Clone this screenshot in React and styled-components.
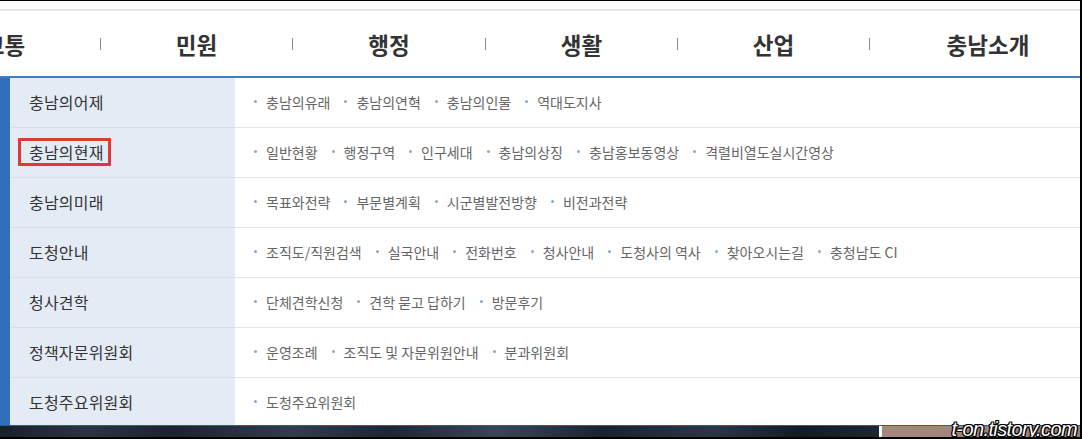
import React from "react";
import styled, { createGlobalStyle } from "styled-components";

const Global = createGlobalStyle`
  html, body { margin: 0; padding: 0; background: #fff; }
  body { font-family: "Noto Sans CJK KR", "Noto Sans", sans-serif; }
  * { box-sizing: border-box; }
`;

const Frame = styled.div`
  position: relative;
  width: 1082px;
  height: 439px;
  border-top: 1px solid #000;
  border-right: 2px solid #000;
  border-bottom: 2px solid #000;
  display: flex;
  flex-direction: column;
  overflow: hidden;
  background: #fff;
`;

const Header = styled.header`
  padding-top: 8px;
  flex: 0 0 auto;
`;

const Nav = styled.nav`
  height: 69px;
  border-top: 2px solid #e6e6e6;
  border-bottom: 2px solid #3f7ec6;
  overflow: hidden;
  display: flex;
  align-items: center;
`;

const NavList = styled.ul`
  list-style: none;
  margin: 0 0 0 -91px;
  padding: 0;
  display: flex;
  align-items: center;
  flex-shrink: 0;
`;

const NavItem = styled.li`
  flex: 0 0 ${(p) => p.$w}px;
  text-align: center;
  font-size: 22.5px;
  font-weight: 700;
  color: #333;
  line-height: 30px;
`;

const NavSep = styled.li`
  flex: 0 0 1px;
  height: 12px;
  background: #8a8a8a;
`;

const Body = styled.div`
  flex: 1 1 auto;
  min-height: 0;
  overflow: hidden;
  border-left: 10px solid #2e6fb8;
  display: flex;
  flex-direction: column;
`;

const Row = styled.div`
  flex: 0 0 50px;
  display: grid;
  grid-template-columns: 225px 1fr;
`;

const Label = styled.div`
  background: #e3ebf5;
  border-bottom: 1px solid #d6dee9;
  display: flex;
  align-items: center;
  padding: 0 0 2px 19px;
  font-size: 16px;
  letter-spacing: 0.2px;
  color: #333;
`;

const LabelText = styled.span`
  position: relative;
  line-height: 20px;
  ${(p) =>
    p.$marked &&
    `
    &::after {
      content: "";
      position: absolute;
      left: -11px;
      right: -7px;
      top: -4px;
      bottom: -4px;
      border: 3px solid #dc3b33;
    }
  `}
`;

const Links = styled.ul`
  list-style: none;
  margin: 0;
  padding: 0 0 2px 19px;
  border-bottom: 1px solid #e5e5e5;
  display: flex;
  align-items: center;
  gap: 14px;
  background: #fff;
`;

const LinkItem = styled.li`
  display: flex;
  align-items: center;
  font-size: 14px;
  color: #666;
  white-space: nowrap;
  &::before {
    content: "";
    width: 3px;
    height: 3px;
    border-radius: 50%;
    background: #8fa9c9;
    margin-right: 9px;
  }
`;

const BottomBar = styled.div`
  flex: 0 0 12px;
  border-top: 1px solid #2b5c9c;
  background: linear-gradient(
    90deg,
    #1a2029 0%,
    #2b3440 8%,
    #1c232c 16%,
    #323c4a 27%,
    #1f2630 36%,
    #3a4656 46%,
    #1c222b 56%,
    #2c3643 66%,
    #151b22 74%,
    #1f262f 81.4%,
    #ffffff 81.4%,
    #ffffff 81.7%,
    #a7877f 81.7%,
    #9c7f78 100%
  );
`;

const Watermark = styled.div`
  position: absolute;
  right: 3px;
  bottom: -4px;
  font-family: "Liberation Sans", Arial, sans-serif;
  font-style: italic;
  font-weight: 400;
  font-size: 20px;
  letter-spacing: -0.6px;
  color: #fff;
  text-shadow: -1px -1px 0 #000, 1px -1px 0 #000, -1px 1px 0 #000, 1px 1px 0 #000,
    0 1px 0 #000, 0 -1px 0 #000, 1px 0 0 #000, -1px 0 0 #000;
`;

const navItems = [
  { t: "교통", w: 191 },
  { t: "민원", w: 191 },
  { t: "행정", w: 192 },
  { t: "생활", w: 191 },
  { t: "산업", w: 191 },
  { t: "충남소개", w: 236 },
];

const rows = [
  { label: "충남의어제", links: ["충남의유래", "충남의연혁", "충남의인물", "역대도지사"] },
  {
    label: "충남의현재",
    marked: true,
    links: ["일반현황", "행정구역", "인구세대", "충남의상징", "충남홍보동영상", "격렬비열도실시간영상"],
  },
  { label: "충남의미래", links: ["목표와전략", "부문별계획", "시군별발전방향", "비전과전략"] },
  {
    label: "도청안내",
    links: ["조직도/직원검색", "실국안내", "전화번호", "청사안내", "도청사의 역사", "찾아오시는길", "충청남도 CI"],
  },
  { label: "청사견학", links: ["단체견학신청", "견학 묻고 답하기", "방문후기"] },
  { label: "정책자문위원회", links: ["운영조례", "조직도 및 자문위원안내", "분과위원회"] },
  { label: "도청주요위원회", links: ["도청주요위원회"] },
];

export default function App() {
  return (
    <>
      <Global />
      <Frame>
        <Header>
          <Nav>
            <NavList>
              {navItems.map((n, i) => (
                <React.Fragment key={n.t}>
                  {i > 0 && <NavSep />}
                  <NavItem $w={n.w}>{n.t}</NavItem>
                </React.Fragment>
              ))}
            </NavList>
          </Nav>
        </Header>
        <Body>
          {rows.map((r) => (
            <Row key={r.label}>
              <Label>
                <LabelText $marked={r.marked}>{r.label}</LabelText>
              </Label>
              <Links>
                {r.links.map((l) => (
                  <LinkItem key={l}>{l}</LinkItem>
                ))}
              </Links>
            </Row>
          ))}
        </Body>
        <BottomBar />
        <Watermark>t-on.tistory.com</Watermark>
      </Frame>
    </>
  );
}
